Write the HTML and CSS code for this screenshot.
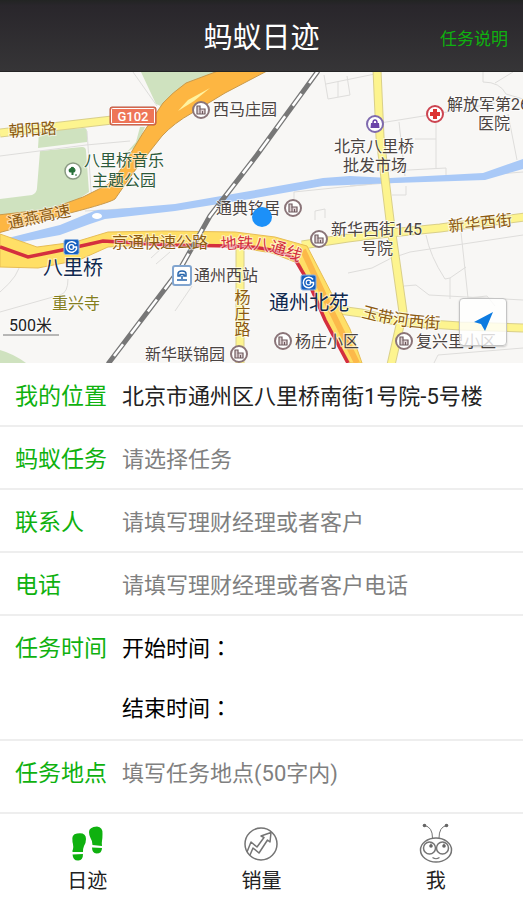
FILE: index.html
```html
<!DOCTYPE html>
<html lang="zh-CN">
<head>
<meta charset="utf-8">
<meta name="viewport" content="width=device-width, initial-scale=1">
<title>蚂蚁日迹</title>
<link rel="stylesheet" href="styles.css">
</head>
<body>
<div class="app">
  <header class="topbar">
    <h1 class="topbar-title">蚂蚁日迹</h1>
    <a class="topbar-link" href="#help">任务说明</a>
  </header>

  <section class="map" aria-label="地图">
    <svg class="map-canvas" viewBox="0 72 523 291">
      <defs>
        <g id="poi-building">
          <circle r="8" fill="#fff" stroke="#8a7478" stroke-width="2"/>
          <path d="M-4 4V-4H-1V-1H4V4Z" fill="#dccfd2" stroke="#6f5a5e" stroke-width="1.200"/>
          <path d="M-1 4V-1M1.500 4V1" stroke="#6f5a5e"/>
        </g>
        <g id="metro">
          <rect x="-7.500" y="-7.500" width="15" height="15" rx="2" fill="#1660c0" stroke="#8fb3e0"/>
          <path d="M4.500 -3A5.300 5.300 0 1 0 5 2V0H1" fill="none" stroke="#fff" stroke-width="1.500"/>
          <circle r="2.300" fill="none" stroke="#fff" stroke-width="1.200"/>
        </g>
        <path id="line-batong" d="M221 250Q268 244 304 265"/>
        <path id="road-yudaihe" d="M361 317Q400 328 446 329"/>
      </defs>
      <rect y="72" width="523" height="291" fill="#f8f7f5"/>

      <g fill="#cfe2bf">
        <path d="M141 72H220L186 84L163 107L156 104Z"/>
        <path d="M39 131L84 128Q87 128 87 132V142L38 148Z"/>
        <path d="M40 151L82 147Q86 147 86 151L89 192L60 211L0 218V199L32 195Q37 193 37 188Z"/>
        <path d="M145 127L137 146L127 152L136 142L140 127Z"/>
        <path d="M0 350Q14 354 26 363H0Z"/>
      </g>

      <g class="lane">
        <path d="M133 72L157 106M0 156L86 145L130 141M87 131L92 205M175 206L85 211M0 312L60 295Q68 293 68 279M0 292Q20 275 20 262"/>
        <path d="M324 75L328 99L350 95L347 76M326 84L375 74M338 82V97M380 123L436 114L436 168M399 122L405 176M415 139H436M436 114L495 103M483 72V82Q500 82 506 94L523 99M495 83L513 72"/>
        <path d="M390 171L446 168V175M508 114L517 160M350 186L523 172M294 211V192L372 184M315 220V211L325 209V218M392 195H406V186"/>
        <path d="M348 273L372 268Q390 257 410 252L523 235M426 235Q430 256 445 279L450 278L466 267M461 232L468 298M450 278V299M404 286L416 285L429 295L523 300M468 298L487 296L495 306M434 363L438 355L523 348M151 258L163 247M156 264L170 252M175 311L192 286"/>
      </g>

      <path d="M0 240L60 225L94 211Q100 209 106 210L175 204L250 191L323 178L350 176L390 178L483 173L523 159V169L485 180L395 183L323 186L250 199L175 211L105 219L90 224L60 235L0 246Z" fill="#a9c9f7"/>
      <ellipse cx="97" cy="216" rx="5" ry="3" fill="#fff"/>

      <g class="road-edge">
        <path d="M0 133L112 120L150 112M377 70L380 137L390 220L403 312L391 365M302 245L348 238L380 234L440 228L525 217M332 309L361 313L400 322L460 326L525 328M240 245V363"/>
      </g>
      <g class="road-fill">
        <path d="M0 133L112 120L150 112M377 70L380 137L390 220L403 312L391 365M302 245L348 238L380 234L440 228L525 217M332 309L361 313L400 322L460 326L525 328M240 245V363"/>
      </g>

      <path class="express" d="M-2 215L50 209L83 197L107 185Q117 177 123 166L143 133L163 103Q172 93 186 83L218 71H267L225 93L192 113Q174 123 162 136L147 155L133 173L115 199Q109 203 70 213L-2 233Z"/>
      <path d="M178 111L188 100L210 88L194 101Z" fill="#fff3a0"/>
      <path d="M0 234L37 247L75 242L108 232L165 231L235 232L275 237L307 246L350 329L362 363H350L323 315L300 264L272 253L230 246L165 244L108 247L79 260L38 268L0 267Z" fill="#ffdf66" stroke="#e7bd55"/>
      <path d="M303 250L325 298L357 363" fill="none" stroke="#fcb94a" stroke-width="6"/>
      <path d="M0 247L28 257L72 248L103 241L170 245L232 246Q276 247 295 259L309 283L325 320L348 363" fill="none" stroke="#d42f3e" stroke-width="3.500"/>

      <path d="M318 71L257 155L210 216L180 269L108 364" fill="none" stroke="#777" stroke-width="5"/>
      <path d="M318 71L257 155L210 216L180 269L108 364" fill="none" stroke="#fff" stroke-width="2.500" stroke-dasharray="15 13"/>

      <rect x="110" y="107" width="46" height="18" rx="2" fill="#ee7558" stroke="#b95740"/>
      <rect x="111.500" y="108.500" width="43" height="15" rx="1" fill="none" stroke="#fff"/>
      <text class="sign" x="133" y="121">G102</text>

      <use href="#poi-building" x="201" y="110"/>
      <use href="#poi-building" x="293" y="208"/>
      <use href="#poi-building" x="319" y="239"/>
      <use href="#poi-building" x="239" y="354"/>
      <use href="#poi-building" x="283" y="341"/>
      <use href="#poi-building" x="404" y="341"/>
      <circle cx="73" cy="171" r="8" fill="#fff" stroke="#8a9a83" stroke-width="1.500"/>
      <path d="M72 175V172H69.500Q68 169 70.500 168.500Q71.500 166 74 168Q76 170 74.500 172H73V175M75 175H77" fill="#28703a" stroke="#28703a"/>
      <circle cx="375" cy="124" r="8" fill="#fff" stroke="#7f6aae" stroke-width="2"/>
      <path d="M371 123H379L379.500 128H370.500Z" fill="#6a43a8"/>
      <path d="M373 123Q373 120 375 120Q377 120 377 123" fill="none" stroke="#6a43a8" stroke-width="1.500"/>
      <circle cx="435" cy="114" r="8" fill="#fff" stroke="#cc4450" stroke-width="2"/>
      <path d="M435 109V119M430 114H440" stroke="#dc3333" stroke-width="4"/>
      <rect x="173" y="266" width="18" height="19" rx="2" fill="#fff" stroke="#82a5cf" stroke-width="2"/>
      <path d="M178 276V274Q178 271 182 271Q186 271 186 274V276H184V274.500H180V276ZM182 276V279M177 280H187" fill="none" stroke="#2865ac" stroke-width="1.500"/>
      <use href="#metro" x="71.500" y="247"/>
      <use href="#metro" x="308.500" y="282.500"/>

      <g class="place">
        <text x="213" y="115">西马庄园</text>
        <text x="447" y="110">解放军第263</text>
        <text x="478" y="129">医院</text>
        <text x="334" y="152">北京八里桥</text>
        <text x="343" y="171">批发市场</text>
        <text x="216" y="214">通典铭居</text>
        <text x="331" y="235">新华西街145</text>
        <text x="361" y="254">号院</text>
        <text x="194" y="281">通州西站</text>
        <text x="145" y="360">新华联锦园</text>
        <text x="295" y="347">杨庄小区</text>
        <text x="416" y="347">复兴里小区</text>
      </g>
      <g class="place park">
        <text x="84" y="166">八里桥音乐</text>
        <text x="92" y="186">主题公园</text>
      </g>
      <g class="place road">
        <text x="9" y="137" transform="rotate(-4 9 137)">朝阳路</text>
        <text x="9" y="229" transform="rotate(-12 9 229)">通燕高速</text>
        <text x="112" y="248">京通快速公路</text>
        <text x="449" y="232" transform="rotate(-6 449 232)">新华西街</text>
        <text class="upright" x="241" y="289">杨庄路</text>
        <text><textPath href="#road-yudaihe">玉带河西街</textPath></text>
      </g>
      <text class="place temple" x="52" y="309">重兴寺</text>
      <text class="place rail"><textPath href="#line-batong">地铁八通线</textPath></text>
      <g class="place station">
        <text x="43" y="275">八里桥</text>
        <text x="269" y="310">通州北苑</text>
      </g>

      <circle cx="262" cy="217" r="10" fill="#1c90f8"/>
      <text class="place scale" x="9" y="331">500米</text>
      <path d="M3 335H59" stroke="#777"/>
    </svg>
    <button class="locate" type="button" aria-label="定位">
      <svg viewBox="0 0 24 24" width="24" height="24"><path d="M22 2L3 12L10 14L14 21Z" fill="#0d7be0"/></svg>
    </button>
  </section>

  <form class="form">
    <div class="row">
      <label class="label" for="place">我的位置</label>
      <input class="field" id="place" type="text" value="北京市通州区八里桥南街1号院-5号楼">
    </div>
    <div class="row">
      <label class="label" for="task">蚂蚁任务</label>
      <select class="field field-empty" id="task"><option>请选择任务</option></select>
    </div>
    <div class="row">
      <label class="label" for="contact">联系人</label>
      <input class="field" id="contact" type="text" placeholder="请填写理财经理或者客户">
    </div>
    <div class="row">
      <label class="label" for="phone">电话</label>
      <input class="field" id="phone" type="tel" placeholder="请填写理财经理或者客户电话">
    </div>
    <div class="row row-times" role="group" aria-labelledby="time-label">
      <span class="label" id="time-label">任务时间</span>
      <div class="times">
        <div class="time">
          <label for="start">开始时间<span class="colon" lang="zh-TW">：</span></label>
          <input class="field" id="start" type="text">
        </div>
        <div class="time">
          <label for="end">结束时间<span class="colon" lang="zh-TW">：</span></label>
          <input class="field" id="end" type="text">
        </div>
      </div>
    </div>
    <div class="row row-last">
      <label class="label" for="where">任务地点</label>
      <input class="field" id="where" type="text" placeholder="填写任务地点(50字内)">
    </div>
  </form>

  <nav class="tabs">
    <a class="tab" href="#trace">
      <svg class="tab-icon" viewBox="0 0 36 42" fill="#0fb10f">
        <path d="M3.500 28.500Q5 25 3.500 20Q2 12 8 11.500Q17 10 17 17Q17 21 15 24Q14 26 14 30L3.500 30Z"/>
        <path d="M3.500 32.500L14 32Q14 38 9.500 38.500Q4 39 3.500 32.500Z"/>
        <path d="M23.500 23Q23.500 19 21.500 16Q20 13 20 10Q20 5 28 4.500Q34 5 33.500 12Q33.500 16 33 19Q32.500 21 33 24Z"/>
        <path d="M23 25.500L33 26Q33 31.500 27.500 31.500Q23 31 23 25.500Z"/>
      </svg>
      <span>日迹</span>
    </a>
    <a class="tab" href="#sales">
      <svg class="tab-icon" viewBox="0 0 36 42" fill="none" stroke="#747474" stroke-width="1.500">
        <circle cx="18" cy="22" r="16"/>
        <path d="M4 30L8 20L14 25L21 15.500L18 14L28 10.500L27 20L24.500 18L16 31L10 26L7 33" stroke-linejoin="round"/>
      </svg>
      <span>销量</span>
    </a>
    <a class="tab" href="#me">
      <svg class="tab-icon" viewBox="0 0 36 42" fill="none" stroke="#747474" stroke-width="1.500">
        <ellipse cx="18" cy="28" rx="15.500" ry="12"/>
        <circle cx="11.500" cy="26" r="6"/>
        <circle cx="24.500" cy="26" r="6"/>
        <path d="M6.500 3.500Q14.500 5 14.500 16M28.500 3.500Q21 5 21 16" stroke-width="1"/>
        <path d="M14.500 35.500Q18 38 21.500 35.500M13 21.500V25M26 21.500V25" stroke-width="1.200"/>
        <g fill="#666" stroke="none"><circle cx="6.500" cy="3.500" r="1.800"/><circle cx="28.500" cy="3.500" r="1.800"/><circle cx="13" cy="24" r="1.800"/><circle cx="26" cy="24" r="1.800"/></g>
      </svg>
      <span>我</span>
    </a>
  </nav>
</div>
</body>
</html>
```

FILE: styles.css
```css
* {
  box-sizing: border-box;
}

body {
  margin: 0;
  background: #fff;
  color: #222;
  font-family: Roboto, "Noto Sans CJK SC", sans-serif;
  font-size: 22px;
}

a {
  color: inherit;
  text-decoration: none;
}

.app {
  display: flex;
  flex-direction: column;
  min-height: 100vh;
}

.topbar {
  display: grid;
  grid-template-columns: 1fr auto 1fr;
  align-items: center;
  height: 72px;
  padding: 4px 15px 0;
  background: linear-gradient(#222423, #29262b 8%, #363537);
  border-bottom: 1px solid #252525;
}

.topbar-title {
  grid-column: 2;
  margin: 0;
  color: #fff;
  font-size: 29px;
  font-weight: 400;
  line-height: 40px;
}

.topbar-link {
  justify-self: end;
  color: #0fb10f;
  font-size: 17px;
}

.map {
  position: relative;
}

.map-canvas {
  display: block;
  width: 100%;
}

.lane {
  fill: none;
  stroke: #dedddb;
  stroke-width: 1;
}

.road-edge {
  fill: none;
  stroke: #d9cf8a;
  stroke-width: 9;
}

.road-fill {
  fill: none;
  stroke: #fdf48f;
  stroke-width: 7;
}

.express {
  fill: #fdb642;
  stroke: #c99a4c;
}

.sign {
  fill: #fff;
  font-size: 13px;
  font-weight: 500;
  text-anchor: middle;
}

.place {
  fill: #4b4442;
  stroke: #fff;
  stroke-width: 2;
  stroke-opacity: 0.6;
  paint-order: stroke;
  font-size: 16px;
}

.park {
  fill: #2c5a3a;
}

.road {
  fill: #8c5a10;
}

.upright {
  writing-mode: vertical-rl;
}

.temple {
  fill: #84801f;
}

.rail {
  fill: #d42f3e;
}

.station {
  fill: #10294f;
  font-size: 20px;
}

.scale {
  fill: #222;
}

.locate {
  position: absolute;
  right: 16px;
  bottom: 17px;
  display: grid;
  place-items: center;
  width: 48px;
  height: 48px;
  padding: 0;
  background: rgba(255, 255, 255, 0.8);
  border: 1px solid #c4c4c4;
  border-radius: 4px;
  box-shadow: 0 1px 2px rgba(0, 0, 0, 0.2);
}

.form {
  flex: 1;
  padding-top: 1px;
}

.row {
  display: flex;
  align-items: flex-start;
  padding: 5px 15px 0;
  border-bottom: 2px solid #eee;
  line-height: 56px;
}

.row-times {
  padding-bottom: 2px;
}

.row-last {
  padding-bottom: 10px;
}

.label {
  flex: 0 0 107px;
  color: #0fb10f;
  font-size: 23px;
}

.field {
  flex: 1;
  min-width: 0;
  height: 56px;
  padding: 0;
  appearance: none;
  background: none;
  border: 0;
  outline: 0;
  color: #222;
  font: inherit;
}

.field::placeholder,
.field-empty {
  color: #808080;
  opacity: 1;
}

.times {
  flex: 1;
  display: grid;
  gap: 4px;
  color: #000;
}

.time {
  display: flex;
}

.colon {
  font-family: "Noto Sans CJK TC", sans-serif;
  line-height: 1;
}

.tabs {
  display: grid;
  grid-template-columns: repeat(3, 1fr);
  padding: 8px 0 2px;
}

.tab {
  display: flex;
  flex-direction: column;
  align-items: center;
  font-size: 20px;
  line-height: 34px;
}

.tab-icon {
  width: 36px;
  height: 42px;
}
```
